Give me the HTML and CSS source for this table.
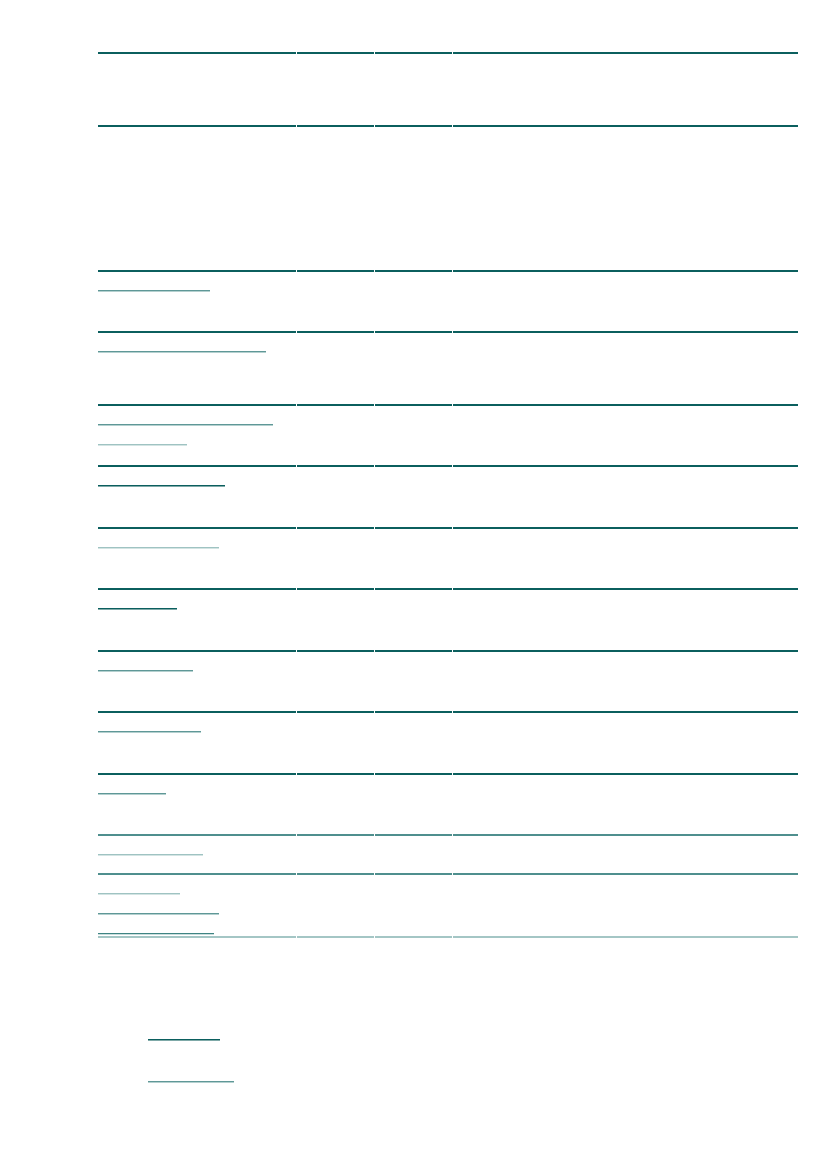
FILE: index.html
```html
<!DOCTYPE html>
<html lang="en">
<head>
<meta charset="utf-8">
<title>Index</title>
<link rel="stylesheet" href="styles.css">
</head>
<body>
<div class="page">
  <div class="tbl">
    <div class="row h73">
      <div class="c">Name</div><div class="c">Size</div><div class="c">Date</div><div class="c">Description</div>
    </div>
    <div class="row h145">
      <div class="c"></div><div class="c"></div><div class="c"></div><div class="c"></div>
    </div>
    <div class="row h61">
      <div class="c"><a class="lnk mid w112" href="#">Overview</a></div><div class="c"></div><div class="c"></div><div class="c"></div>
    </div>
    <div class="row h73">
      <div class="c"><a class="lnk mid w168" href="#">Getting started</a></div><div class="c"></div><div class="c"></div><div class="c"></div>
    </div>
    <div class="row h61">
      <div class="c"><a class="lnk mid w175" href="#">Installation guide</a><a class="lnk light w89" href="#">Notes</a></div><div class="c"></div><div class="c"></div><div class="c"></div>
    </div>
    <div class="row h62">
      <div class="c"><a class="lnk dark w127" href="#">Configuration</a></div><div class="c"></div><div class="c"></div><div class="c"></div>
    </div>
    <div class="row h61">
      <div class="c"><a class="lnk light w121" href="#">Usage examples</a></div><div class="c"></div><div class="c"></div><div class="c"></div>
    </div>
    <div class="row h62">
      <div class="c"><a class="lnk dark w79" href="#">Reference</a></div><div class="c"></div><div class="c"></div><div class="c"></div>
    </div>
    <div class="row h61">
      <div class="c"><a class="lnk mid w95" href="#">Changelog</a></div><div class="c"></div><div class="c"></div><div class="c"></div>
    </div>
    <div class="row h62">
      <div class="c"><a class="lnk mid w103" href="#">Downloads</a></div><div class="c"></div><div class="c"></div><div class="c"></div>
    </div>
    <div class="row h61">
      <div class="c"><a class="lnk mid w68" href="#">License</a></div><div class="c"></div><div class="c"></div><div class="c"></div>
    </div>
    <div class="row h39 soft">
      <div class="c"><a class="lnk light w105" href="#">Contributors</a></div><div class="c"></div><div class="c"></div><div class="c"></div>
    </div>
    <div class="row h65 soft last">
      <div class="c"><a class="lnk light w82" href="#">Support</a><a class="lnk mid w121" href="#">Mailing lists</a><a class="lnk darkmid w116" href="#">Issue tracker</a></div><div class="c"></div><div class="c"></div><div class="c"></div>
    </div>
  </div>
  <ul class="foot">
    <li><a class="lnk dark w72" href="#">Home</a></li>
    <li><a class="lnk mid w86" href="#">Parent</a></li>
  </ul>
</div>
</body>
</html>
```

FILE: styles.css
```css
html, body {
  margin: 0;
  padding: 0;
  background: #ffffff;
}
body {
  font-family: "Liberation Sans", Arial, sans-serif;
  font-size: 13px;
  color: #ffffff;
}
.page {
  padding: 52px 0 0 98px;
}
.tbl {
  width: 700px;
}
.row {
  display: grid;
  grid-template-columns: 198px 77px 77px 345px;
  column-gap: 1px;
}
.c {
  box-sizing: border-box;
  border-top: 2px solid #0b5f5e;
  padding-top: 1px;
  overflow: hidden;
}
.row.soft .c {
  border-top-color: #4f8f8e;
}
.row.last .c {
  border-bottom: 2px solid #a4c6c5;
}
.h39 { height: 39px; }
.h61 { height: 61px; }
.h62 { height: 62px; }
.h65 { height: 65px; }
.h73 { height: 73px; }
.h145 { height: 145px; }

.lnk {
  display: block;
  box-sizing: content-box;
  height: 17px;
  line-height: 17px;
  margin-bottom: 2px;
  color: #ffffff;
  text-decoration: none;
  white-space: nowrap;
  overflow: hidden;
  border-bottom: 1px solid #5e9a99;
  box-shadow: 0 1px 0 #c9dddc;
}
.lnk.dark { border-bottom-color: #0b5f5e; box-shadow: 0 1px 0 #7fa9a8; }
.lnk.darkmid { border-bottom-color: #3f8483; }
.lnk.mid { border-bottom-color: #5f9897; box-shadow: 0 1px 0 #b4d0cf; }
.lnk.light { border-bottom-color: #9fc3c2; box-shadow: 0 1px 0 #d3e4e3; }

.w68 { width: 68px; }
.w72 { width: 72px; }
.w79 { width: 79px; }
.w82 { width: 82px; }
.w86 { width: 86px; }
.w89 { width: 89px; }
.w95 { width: 95px; }
.w103 { width: 103px; }
.w105 { width: 105px; }
.w112 { width: 112px; }
.w116 { width: 116px; }
.w121 { width: 121px; }
.w127 { width: 127px; }
.w168 { width: 168px; }
.w175 { width: 175px; }

.foot {
  list-style: none;
  margin: 84px 0 0 0;
  padding: 0 0 0 50px;
}
.foot li {
  height: 42px;
}
```
